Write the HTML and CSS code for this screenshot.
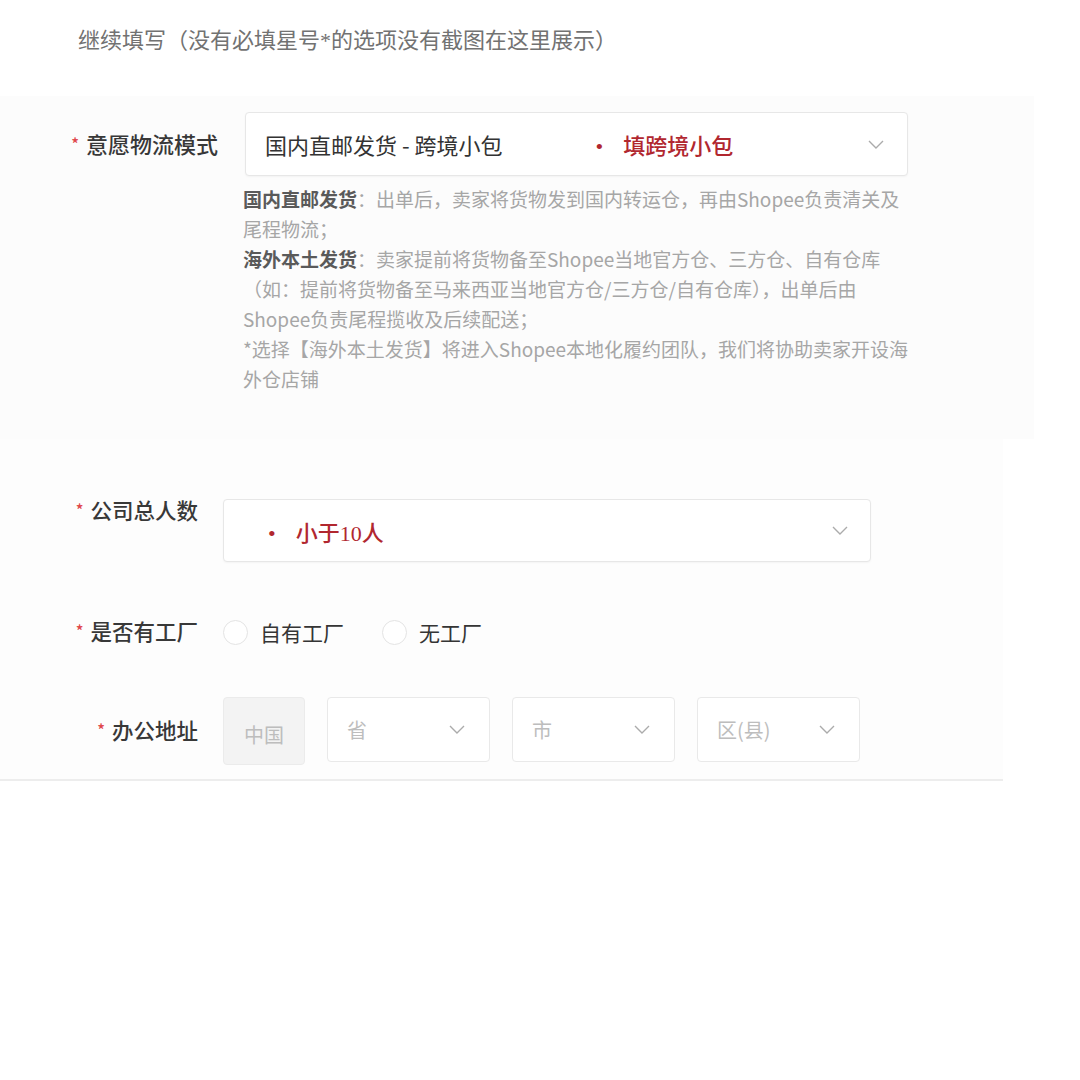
FILE: index.html
```html
<!DOCTYPE html>
<html>
<head>
<meta charset="utf-8">
<link rel="stylesheet" href="styles.css">
</head>
<body>

<p class="intro">继续填写（没有必填星号*的选项没有截图在这里展示）</p>

<div class="shot shotOne">
	<div class="formRow">
		<label class="fieldLabel labelWide"><span class="req">*</span>意愿物流模式</label>
		<div class="selectBox selectLogistics">
			<span class="selectValue">国内直邮发货 - 跨境小包</span>
			<span class="note noteLogistics"><span class="dot">•</span>填跨境小包</span>
			<svg class="chevron" width="16" height="9" viewBox="0 0 16 9"><polyline points="1,1 8,8 15,1" /></svg>
		</div>
	</div>
	<div class="helpText">
		<p><b>国内直邮发货</b>：出单后，卖家将货物发到国内转运仓，再由Shopee负责清关及尾程物流；</p>
		<p><b>海外本土发货</b>：卖家提前将货物备至Shopee当地官方仓、三方仓、自有仓库（如：提前将货物备至马来西亚当地官方仓/三方仓/自有仓库），出单后由Shopee负责尾程揽收及后续配送；</p>
		<p>*选择【海外本土发货】将进入Shopee本地化履约团队，我们将协助卖家开设海外仓店铺</p>
	</div>
</div>

<div class="shot shotTwo">
	<div class="formRow rowTop rowStaff">
		<label class="fieldLabel labelNarrow"><span class="req">*</span>公司总人数</label>
		<div class="selectBox selectStaff">
			<span class="note noteStaff"><span class="dot">•</span>小于10人</span>
			<svg class="chevron" width="16" height="9" viewBox="0 0 16 9"><polyline points="1,1 8,8 15,1" /></svg>
		</div>
	</div>

	<div class="formRow rowFactory">
		<label class="fieldLabel labelNarrow"><span class="req">*</span>是否有工厂</label>
		<div class="radioGroup">
			<span class="radioItem"><span class="radio"></span>自有工厂</span>
			<span class="radioItem"><span class="radio"></span>无工厂</span>
		</div>
	</div>

	<div class="formRow rowTop rowAddress">
		<label class="fieldLabel labelNarrow labelAddress"><span class="req">*</span>办公地址</label>
		<div class="addressGroup">
			<div class="countryBox">中国</div>
			<div class="areaBox"><span>省</span><svg class="chevron" width="16" height="9" viewBox="0 0 16 9"><polyline points="1,1 8,8 15,1" /></svg></div>
			<div class="areaBox"><span>市</span><svg class="chevron" width="16" height="9" viewBox="0 0 16 9"><polyline points="1,1 8,8 15,1" /></svg></div>
			<div class="areaBox"><span>区(县)</span><svg class="chevron" width="16" height="9" viewBox="0 0 16 9"><polyline points="1,1 8,8 15,1" /></svg></div>
		</div>
	</div>
</div>

</body>
</html>
```

FILE: styles.css
```css
body {
	margin: 0;
	background: #ffffff;
	font-family: "Noto Sans CJK SC", "Noto Sans", sans-serif;
}

.intro {
	margin: 0;
	padding: 28px 0 0 78px;
	font-family: "Liberation Serif", "Noto Sans CJK SC", serif;
	font-size: 22px;
	line-height: 26px;
	color: #727272;
}

.shot {
	box-sizing: border-box;
	background: #fcfcfc;
}

.shotOne {
	width: 1034px;
	margin-top: 42px;
	padding: 16px 0 45px 0;
}

.shotTwo {
	width: 1003px;
	background: #fdfdfd;
	padding: 60px 0 14px 0;
	border-bottom: 2px solid #ededed;
}

.formRow {
	display: flex;
	align-items: center;
}

.rowTop {
	align-items: flex-start;
}

.fieldLabel {
	box-sizing: border-box;
	text-align: right;
	font-size: 21.5px;
	line-height: 22px;
	font-weight: 500;
	color: #383838;
	flex: none;
}

.labelWide {
	width: 218px;
	margin-right: 27px;
	font-size: 22px;
}

.labelNarrow {
	width: 198px;
	margin-right: 25px;
}

.labelAddress {
	padding-top: 22px;
}

.req {
	color: #e0464b;
	font-size: 16px;
	margin-right: 7px;
	position: relative;
	top: -3px;
}

.selectBox {
	box-sizing: border-box;
	display: flex;
	align-items: center;
	background: #ffffff;
	border: 1px solid #e7e7e7;
	border-radius: 4px;
	box-shadow: 0 1px 2px rgba(0, 0, 0, 0.04);
}

.selectLogistics {
	width: 663px;
	height: 64px;
	padding: 0 23px 0 19px;
}

.selectStaff {
	width: 648px;
	height: 63px;
	padding: 0 22px 0 44px;
}

.selectValue {
	font-size: 22px;
	color: #333333;
}

.note {
	font-family: "Liberation Serif", "Noto Sans CJK SC", serif;
	font-size: 22px;
	font-weight: 500;
	color: #b1272f;
}

.noteLogistics {
	margin-left: 93px;
}

.dot {
	margin-right: 20px;
}

.chevron {
	margin-left: auto;
	flex: none;
}

.chevron polyline {
	fill: none;
	stroke: #ababab;
	stroke-width: 1.4;
}

.helpText {
	width: 666px;
	margin: 8px 0 0 243px;
	font-size: 19px;
	line-height: 30px;
	color: #a6a6a6;
}

.helpText p {
	margin: 0;
}

.helpText b {
	font-weight: 700;
	color: #5a5a5a;
}

.rowFactory {
	margin-top: 57px;
	height: 26px;
}

.radioGroup {
	display: flex;
	align-items: center;
	gap: 38px;
}

.radioItem {
	display: flex;
	align-items: center;
	font-size: 21px;
	color: #353535;
}

.radio {
	box-sizing: border-box;
	width: 25px;
	height: 25px;
	margin-right: 12px;
	border: 1px solid #e4e4e4;
	border-radius: 50%;
	background: #ffffff;
}

.rowAddress {
	margin-top: 52px;
}

.addressGroup {
	display: flex;
	gap: 22px;
}

.countryBox {
	box-sizing: border-box;
	width: 82px;
	height: 68px;
	padding: 22px 0 0 20px;
	background: #f3f3f3;
	border: 1px solid #ebebeb;
	border-radius: 4px;
	font-size: 20px;
	color: #bdbdbd;
}

.areaBox {
	box-sizing: border-box;
	display: flex;
	align-items: center;
	width: 163px;
	height: 65px;
	padding: 0 24px 0 19px;
	background: #ffffff;
	border: 1px solid #e9e9e9;
	border-radius: 4px;
	font-size: 20px;
	color: #bdbdbd;
}
```
